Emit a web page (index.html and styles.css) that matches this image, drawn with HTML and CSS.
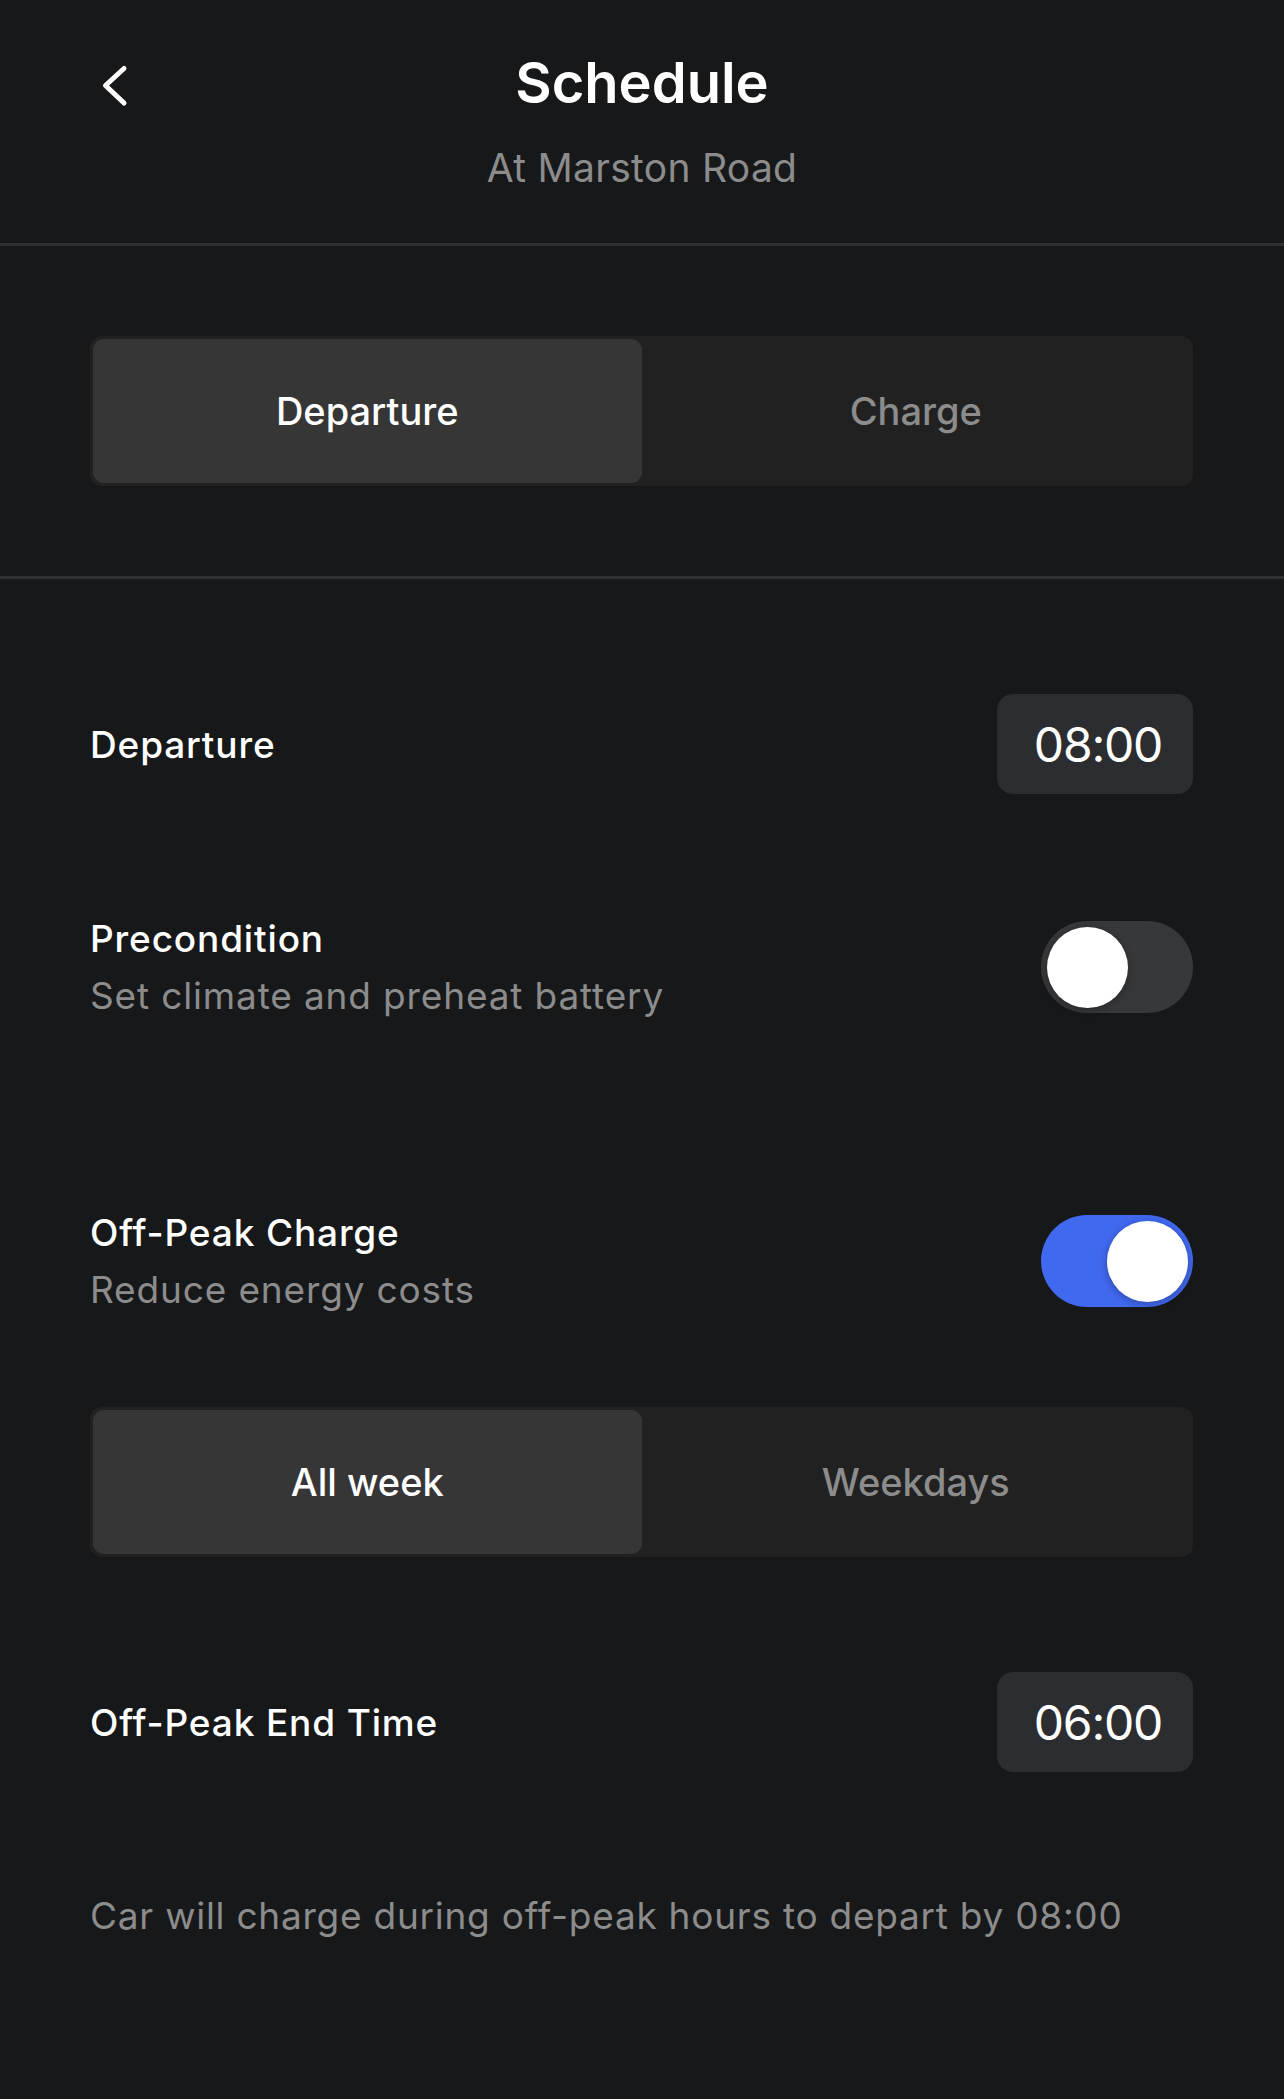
FILE: index.html
```html
<!DOCTYPE html>
<html>
<head>
    <title>Schedule</title>
    <link rel="stylesheet" href="styles.css">
</head>
<body>

    <!-- top bar with back button and location -->
    <header class="top-bar">
        <div class="top-bar-back">
            <svg class="back-icon" width="30" height="44" viewBox="0 0 30 44">
                <polyline points="24,4.5 5.5,21.5 24,39" fill="none" stroke="#ffffff" stroke-width="5" stroke-linecap="round" stroke-linejoin="round"/>
            </svg>
        </div>
        <div class="top-bar-titles">
            <div class="top-bar-title">Schedule</div>
            <div class="top-bar-subtitle">At Marston Road</div>
        </div>
        <div></div>
    </header>

    <section class="mode-section">
        <div class="segmented">
            <div class="segmented-option selected">Departure</div>
            <div class="segmented-option">Charge</div>
        </div>
    </section>

    <section class="settings">

        <div class="setting-row row-departure">
            <div class="setting-label">Departure</div>
            <div class="time-box">08:00</div>
        </div>

        <div class="setting-row row-precondition">
            <div class="setting-text">
                <div class="setting-label">Precondition</div>
                <div class="setting-hint">Set climate and preheat battery</div>
            </div>
            <div class="toggle">
                <div class="toggle-knob"></div>
            </div>
        </div>

        <div class="setting-row row-offpeak">
            <div class="setting-text">
                <div class="setting-label">Off-Peak Charge</div>
                <div class="setting-hint">Reduce energy costs</div>
            </div>
            <div class="toggle on">
                <div class="toggle-knob"></div>
            </div>
        </div>

        <div class="segmented days">
            <div class="segmented-option selected">All week</div>
            <div class="segmented-option">Weekdays</div>
        </div>

        <div class="setting-row row-endtime">
            <div class="setting-label">Off-Peak End Time</div>
            <div class="time-box">06:00</div>
        </div>

        <p class="footnote">Car will charge during off-peak hours to depart by 08:00</p>

    </section>
</body>
</html>
```

FILE: styles.css
```css
body {
    margin: 0;
    padding: 0;
    background-color: #17181a;
    color: #ffffff;
    font-family: Inter, "Noto Sans", sans-serif;
}

/* Top bar */
.top-bar {
    display: grid;
    grid-template-columns: 1fr auto 1fr;
    height: 246px;
    box-sizing: border-box;
    padding-top: 51px;
    border-bottom: 3px solid #2e2f31;
}

.top-bar-back {
    padding-left: 100px;
    padding-top: 13px;
}

.back-icon {
    display: block;
}

.top-bar-titles {
    text-align: center;
}

.top-bar-title {
    font-size: 56px;
    line-height: 64px;
    font-weight: 600;
}

.top-bar-subtitle {
    margin-top: 29px;
    font-size: 39px;
    line-height: 48px;
    letter-spacing: 0.3px;
    color: #8c8c8c;
}

/* Segmented control */
.mode-section {
    padding: 90px 91px 90px 90px;
    border-bottom: 3px solid #2e2f31;
}

.segmented {
    display: flex;
    height: 150px;
    box-sizing: border-box;
    padding: 3px;
    border-radius: 12px;
    background-color: #212121;
}

.segmented-option {
    flex: 1;
    display: flex;
    align-items: center;
    justify-content: center;
    border-radius: 11px;
    font-size: 38px;
    font-weight: 500;
    color: #8c8c8c;
}

.segmented-option.selected {
    background-color: #363636;
    color: #ffffff;
}

/* Settings list */
.settings {
    padding: 0 91px 0 90px;
}

.setting-row {
    display: flex;
    align-items: center;
    justify-content: space-between;
}

.row-departure {
    margin-top: 115px;
}

.row-precondition {
    margin-top: 116px;
}

.row-offpeak {
    margin-top: 180px;
}

.segmented.days {
    margin-top: 89px;
}

.row-endtime {
    margin-top: 115px;
}

.setting-label {
    font-size: 37px;
    line-height: 57px;
    font-weight: 500;
    letter-spacing: 0.85px;
}

.setting-hint {
    font-size: 37px;
    line-height: 57px;
    letter-spacing: 0.85px;
    color: #8c8c8c;
}

.time-box {
    width: 196px;
    height: 100px;
    display: flex;
    align-items: center;
    justify-content: center;
    padding-left: 6px;
    box-sizing: border-box;
    border-radius: 16px;
    background-color: #2c2d30;
    font-size: 48px;
    letter-spacing: -1.2px;
}

/* Toggle switch */
.toggle {
    width: 152px;
    height: 92px;
    box-sizing: border-box;
    padding: 0 6px;
    display: flex;
    align-items: center;
    border-radius: 46px;
    background-color: #37383b;
}

.toggle.on {
    justify-content: flex-end;
    padding: 0 5px;
    background-color: #4169f0;
}

.toggle-knob {
    width: 81px;
    height: 81px;
    border-radius: 50%;
    background-color: #ffffff;
    box-shadow: 0 2px 8px rgba(0, 0, 0, 0.3);
}

.footnote {
    margin: 119px 0 0 0;
    font-size: 37px;
    line-height: 50px;
    letter-spacing: 0.75px;
    color: #8c8c8c;
}
```
